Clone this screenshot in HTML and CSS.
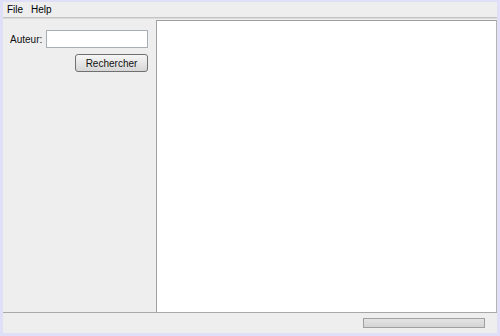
FILE: index.html
```html
<!DOCTYPE html>
<html>
<head>
<meta charset="utf-8">
<link rel="stylesheet" href="styles.css">
</head>
<body>
<div class="frame">
  <div class="app">
    <div class="menubar">
      <span class="menu menu-file">File</span>
      <span class="menu">Help</span>
    </div>
    <div class="main">
      <div class="side">
        <div class="row">
          <label class="label">Auteur:</label>
          <input class="field" type="text">
        </div>
        <div class="row right">
          <button class="btn">Rechercher</button>
        </div>
      </div>
      <div class="pane"></div>
    </div>
    <div class="status">
      <div class="progress"></div>
    </div>
  </div>
</div>
</body>
</html>
```
FILE: styles.css
```css
html, body {
  margin: 0;
  padding: 0;
  width: 500px;
  height: 336px;
  overflow: hidden;
  background: #dfe0f7;
  font-family: "Liberation Sans", Arial, sans-serif;
  font-size: 10px;
  color: #000;
}
.frame {
  padding: 2px 3px 3px 3px;
  height: 336px;
  box-sizing: border-box;
}
.app {
  background: #eeeeee;
  height: 100%;
  display: flex;
  flex-direction: column;
}
.menubar {
  height: 15px;
  display: flex;
  align-items: center;
  padding-left: 4px;
  border-bottom: 1px solid #c4c4c4;
  box-shadow: 0 1px 0 #dadada;
}
.menu {
  line-height: 15px;
}
.menu-file {
  width: 24px;
}
.main {
  flex: 1;
  display: flex;
  padding-top: 2px;
  border-bottom: 1px solid #a8a8a8;
}
.side {
  width: 153px;
  box-sizing: border-box;
  padding: 10px 8px 0 7px;
  display: flex;
  flex-direction: column;
  gap: 6px;
}
.row {
  display: flex;
  align-items: center;
}
.row.right {
  justify-content: flex-end;
}
.label {
  flex: 1;
  color: #111;
}
.field {
  flex: none;
  width: 102px;
  height: 18px;
  box-sizing: border-box;
  margin: 0;
  border: 1px solid #a7aeb6;
  background: #fff;
  padding: 0 2px;
}
.btn {
  width: 73px;
  height: 18px;
  box-sizing: border-box;
  margin: 0;
  padding: 0;
  border: 1px solid #707070;
  border-radius: 3px;
  background: linear-gradient(#f6f6f6, #e6e6e6 50%, #d6d6d6);
  font-family: "Liberation Sans", Arial, sans-serif;
  font-size: 10px;
  color: #111;
}
.pane {
  width: 341px;
  box-sizing: border-box;
  background: #fff;
  border: 1px solid #a0a0a0;
  border-right-color: #b4b4b4;
  border-bottom: none;
}
.status {
  height: 20px;
  display: flex;
  align-items: center;
  justify-content: flex-end;
  padding-right: 12px;
}
.progress {
  width: 122px;
  height: 10px;
  box-sizing: border-box;
  border: 1px solid #a0a0a0;
  background: linear-gradient(#e4e4e4, #d4d4d4);
}
```
